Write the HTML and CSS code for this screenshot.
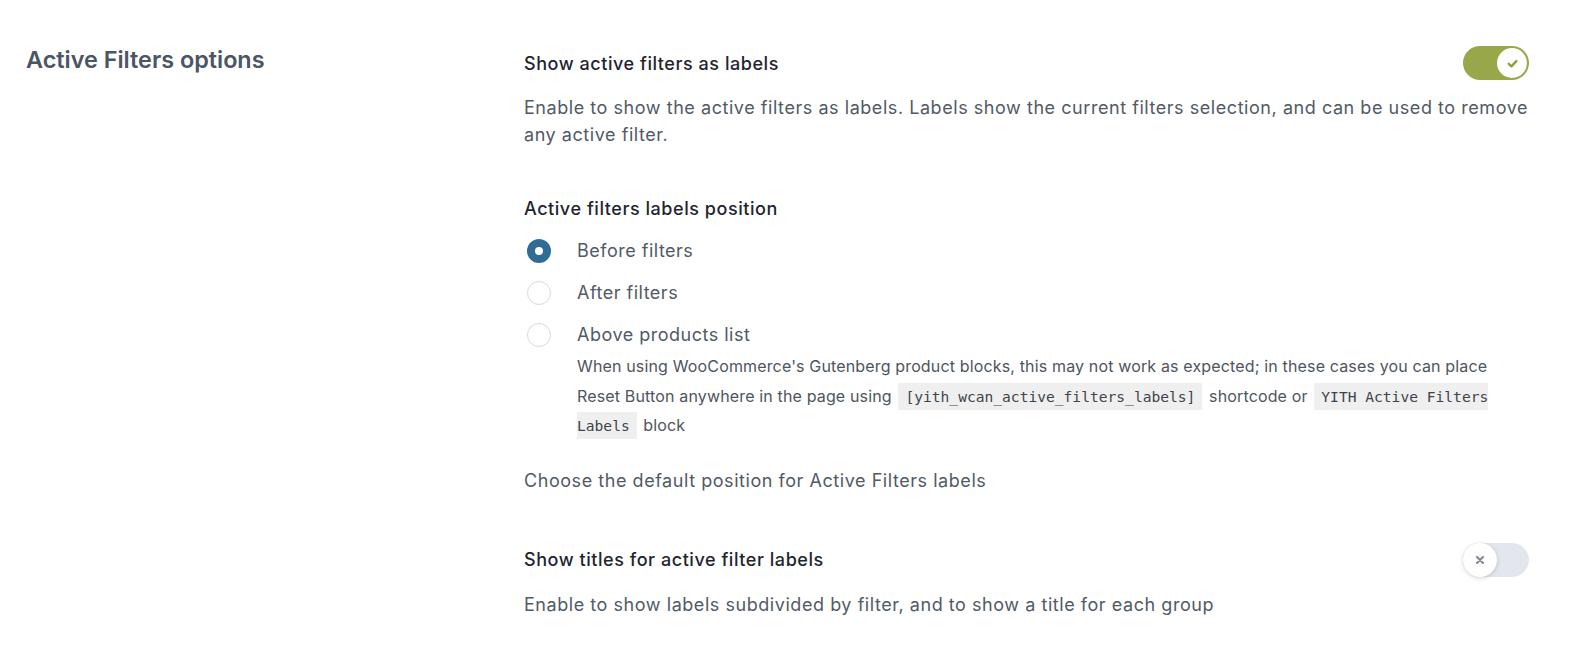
FILE: index.html
```html
<!DOCTYPE html>
<html lang="en">
<head>
<meta charset="utf-8">
<title>Active Filters options</title>
<link rel="stylesheet" href="styles.css">
</head>
<body>
<div class="section">
  <h2 class="section-title">Active Filters options</h2>
  <div class="fields">
    <div class="field field-1">
      <div class="field-head">
        <label class="field-label">Show active filters as labels</label>
        <span class="toggle toggle-on"><span class="knob"><svg viewBox="0 0 12 12" width="13" height="13"><path d="M2.5 6.3 L5 8.6 L9.6 3.8" fill="none" stroke="#8e9e3e" stroke-width="2.2" stroke-linecap="round" stroke-linejoin="round"/></svg></span></span>
      </div>
      <p class="desc">Enable to show the active filters as labels. Labels show the current filters selection, and can be used to remove any active filter.</p>
    </div>

    <div class="field field-2">
      <div class="field-head">
        <label class="field-label">Active filters labels position</label>
      </div>
      <div class="options">
        <div class="option"><span class="radio radio-checked"></span><span class="option-text">Before filters</span></div>
        <div class="option"><span class="radio"></span><span class="option-text">After filters</span></div>
        <div class="option"><span class="radio"></span><span class="option-text">Above products list</span></div>
      </div>
      <p class="note">When using WooCommerce's Gutenberg product blocks, this may not work as expected; in these cases you can place Reset Button anywhere in the page using <code>[yith_wcan_active_filters_labels]</code> shortcode or <code>YITH Active Filters Labels</code> block</p>
      <p class="desc desc-2">Choose the default position for Active Filters labels</p>
    </div>

    <div class="field field-3">
      <div class="field-head">
        <label class="field-label">Show titles for active filter labels</label>
        <span class="toggle toggle-off"><span class="knob"><svg viewBox="0 0 12 12" width="12" height="12"><path d="M3 3 L9 9 M9 3 L3 9" fill="none" stroke="#848b96" stroke-width="2.2" stroke-linecap="round"/></svg></span></span>
      </div>
      <p class="desc">Enable to show labels subdivided by filter, and to show a title for each group</p>
    </div>
  </div>
</div>
</body>
</html>
```

FILE: styles.css
```css
* { box-sizing: border-box; }

html, body {
  margin: 0;
  padding: 0;
  background: #ffffff;
}

body {
  font-family: Inter, "Noto Sans", "Liberation Sans", sans-serif;
  color: #515a66;
}

.section {
  display: grid;
  grid-template-columns: 498px 1005px;
  padding: 44px 0 0 26px;
}

.section-title {
  margin: 1px 0 0;
  font-size: 23.4px;
  line-height: 30px;
  font-weight: 600;
  color: #4a5566;
}

.fields {
  display: flex;
  flex-direction: column;
  gap: 48px;
}

.field-head {
  display: flex;
  align-items: flex-start;
  justify-content: space-between;
}

.field-label {
  display: block;
  font-size: 18px;
  line-height: 24px;
  font-weight: 500;
  letter-spacing: 0.55px;
  color: #1f2530;
}

.field-1 .field-label { margin-top: 8px; }
.field-2 .field-label { margin-top: 1px; }
.field-3 .field-label { margin-top: 6px; }

.field-1 .toggle { margin-top: 2px; }
.field-3 .toggle { margin-top: 1px; }

.desc {
  margin: 15px 0 0;
  font-size: 18px;
  line-height: 26.5px;
  letter-spacing: 0.55px;
  color: #515a66;
}

.toggle {
  flex: none;
  display: flex;
  align-items: center;
  width: 66px;
  height: 34px;
  border-radius: 17px;
  padding: 2px;
}

.toggle-on {
  background: #97a74a;
  justify-content: flex-end;
}

.toggle-off {
  background: #e3e7ed;
  justify-content: flex-start;
  padding: 0;
}

.knob {
  display: flex;
  align-items: center;
  justify-content: center;
  width: 30px;
  height: 30px;
  border-radius: 50%;
  background: #ffffff;
}

.toggle-off .knob {
  width: 34px;
  height: 34px;
  box-shadow: 0 1px 4px rgba(0, 0, 0, 0.18);
}

.options {
  display: flex;
  flex-direction: column;
  gap: 18px;
  margin-top: 18px;
  padding-left: 3px;
}

.option {
  display: flex;
  align-items: center;
  height: 24px;
}

.radio {
  flex: none;
  width: 24px;
  height: 24px;
  border-radius: 50%;
  border: 1px solid #d6d9dd;
  background: #ffffff;
  margin-right: 26px;
}

.radio-checked {
  border: 8px solid #2f6d96;
}

.option-text {
  font-size: 18px;
  line-height: 24px;
  letter-spacing: 0.5px;
  color: #515a66;
}

.note {
  margin: 5px 0 0 53px;
  font-size: 16px;
  line-height: 29.5px;
  letter-spacing: 0.15px;
  color: #4d5560;
}

code {
  font-family: "DejaVu Sans Mono", "Liberation Mono", monospace;
  font-size: 14.6px;
  letter-spacing: 0;
  background: #efefef;
  color: #3d444b;
  padding: 5px 7px;
  margin: 0 2px;
}

.desc.desc-2 { margin-top: 27px; }
```
